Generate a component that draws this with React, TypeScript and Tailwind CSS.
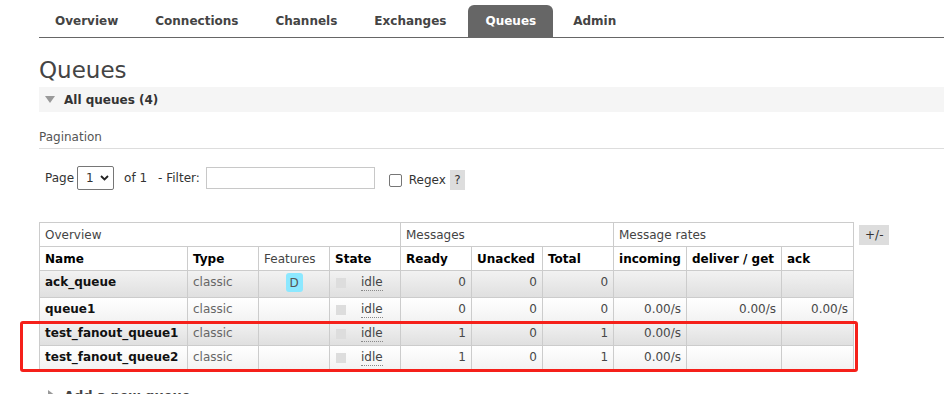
import React from 'react';

const tabs = ['Overview', 'Connections', 'Channels', 'Exchanges', 'Queues', 'Admin'];

type Row = {
  name: string;
  durable: boolean;
  ready: number;
  unacked: number;
  total: number;
  incoming: string;
  deliver: string;
  ack: string;
};

const rows: Row[] = [
  { name: 'ack_queue', durable: true, ready: 0, unacked: 0, total: 0, incoming: '', deliver: '', ack: '' },
  { name: 'queue1', durable: false, ready: 0, unacked: 0, total: 0, incoming: '0.00/s', deliver: '0.00/s', ack: '0.00/s' },
  { name: 'test_fanout_queue1', durable: false, ready: 1, unacked: 0, total: 1, incoming: '0.00/s', deliver: '', ack: '' },
  { name: 'test_fanout_queue2', durable: false, ready: 1, unacked: 0, total: 1, incoming: '0.00/s', deliver: '', ack: '' },
];

const Triangle = () => (
  <svg width="10" height="7" viewBox="0 0 10 7" className="shrink-0">
    <path d="M0 0 L10 0 L5 7 Z" fill="#999" />
  </svg>
);

export default function App() {
  const cell = 'border border-[#ccc] px-[5px] whitespace-nowrap leading-[16px] overflow-hidden';

  return (
    <div className="relative w-[944px] h-[394px] overflow-hidden bg-white text-[12px] text-[#484848] font-['DejaVu_Sans',Verdana,sans-serif]">
      {/* top tabs */}
      <div className="ml-[39px] border-b border-[#666] pt-[5px]">
        <div className="-ml-[1px] flex gap-[3px] h-[32px]">
          {tabs.map((t) => (
            <div
              key={t}
              className={
                t === 'Queues'
                  ? 'px-[17px] ml-[2px] flex items-center font-bold rounded-t-[6px] bg-[#666] text-white'
                  : 'px-[17px] flex items-center font-bold text-[#444]'
              }
            >
              {t}
            </div>
          ))}
        </div>
      </div>

      <div className="ml-[39px]">
        <h1 className="mt-[18px] text-[23px] leading-[28px] text-[#444]">Queues</h1>

        <div className="mt-[3px] h-[25px] bg-[#f5f5f5] flex items-center gap-[9px] pl-[6px]">
          <Triangle />
          <span className="font-bold text-[#333]">All queues (4)</span>
        </div>

        <div className="mt-[17px] pb-[3px] border-b border-[#ddd] leading-[16px] text-[#555]">Pagination</div>

        <div className="mt-[17px] h-[24px] flex items-center pl-[6px] text-[#333]">
          <span>Page</span>
          <div className="ml-[3px] w-[37px] h-[24px] border border-[#767676] rounded-[2px] flex items-center pl-[8px] gap-[6px]">
            <span>1</span>
            <svg width="9" height="6" viewBox="0 0 9 6">
              <path d="M1 1 L4.5 4.5 L8 1" stroke="#222" strokeWidth="1.8" fill="none" />
            </svg>
          </div>
          <span className="ml-[10px]">of 1</span>
          <span className="ml-[11px]">- Filter:</span>
          <div className="ml-[6px] w-[169px] h-[22px] border border-[#c8c8c8]" />
          <div className="ml-[14px] mt-[4px] w-[13px] h-[13px] border border-[#767676] rounded-[2px]" />
          <span className="ml-[7px] mt-[4px]">Regex</span>
          <span className="ml-[4px] mt-[3px] w-[15px] h-[20px] bg-[#ddd] flex items-center justify-center">?</span>
        </div>

        <div className="mt-[32px] flex items-start">
          <table className="table-fixed border-collapse w-[814px]">
            <colgroup>
              <col className="w-[148px]" />
              <col className="w-[71px]" />
              <col className="w-[71px]" />
              <col className="w-[71px]" />
              <col className="w-[71px]" />
              <col className="w-[71px]" />
              <col className="w-[71px]" />
              <col className="w-[73px]" />
              <col className="w-[95px]" />
              <col className="w-[72px]" />
            </colgroup>
            <thead>
              <tr className="h-[24px] text-left">
                <th colSpan={4} className={`${cell} font-normal text-[#444]`}>Overview</th>
                <th colSpan={3} className={`${cell} font-normal text-[#444]`}>Messages</th>
                <th colSpan={3} className={`${cell} font-normal text-[#444]`}>Message rates</th>
              </tr>
              <tr className="h-[24px] text-left text-black">
                <th className={cell}>Name</th>
                <th className={cell}>Type</th>
                <th className={`${cell} font-normal text-[#444]`}>Features</th>
                <th className={cell}>State</th>
                <th className={cell}>Ready</th>
                <th className={cell}>Unacked</th>
                <th className={cell}>Total</th>
                <th className={cell}>incoming</th>
                <th className={cell}>deliver / get</th>
                <th className={cell}>ack</th>
              </tr>
            </thead>
            <tbody>
              {rows.map((r, i) => (
                <tr
                  key={r.name}
                  className={
                    (i % 2 === 0
                      ? 'bg-gradient-to-b from-[#f2f2f2] to-[#dfdfdf]'
                      : 'bg-gradient-to-b from-[#ffffff] to-[#f2f2f2]') +
                    (r.durable ? ' h-[27px]' : ' h-[24px]')
                  }
                >
                  <td className={`${cell} font-bold text-[#111] align-top pt-[3px]`}>{r.name}</td>
                  <td className={`${cell} text-[#666] align-top pt-[3px]`}>classic</td>
                  <td className={`${cell} text-center align-top pt-[2px]`}>
                    {r.durable && (
                      <span className="inline-flex items-center justify-center w-[17px] h-[19px] rounded-[3px] bg-[#8ce8ff] text-[#555]">
                        D
                      </span>
                    )}
                  </td>
                  <td className={`${cell} align-top pt-[3px]`}>
                    <div className="flex items-center h-[17px]">
                      <span className="w-[10px] h-[10px] bg-[#ddd] ml-[1px]" />
                      <span className="ml-[15px] border-b border-dotted border-[#888] leading-[15px] text-[#444]">idle</span>
                    </div>
                  </td>
                  <td className={`${cell} text-right align-top pt-[3px]`}>{r.ready}</td>
                  <td className={`${cell} text-right align-top pt-[3px]`}>{r.unacked}</td>
                  <td className={`${cell} text-right align-top pt-[3px]`}>{r.total}</td>
                  <td className={`${cell} text-right align-top pt-[3px]`}>{r.incoming}</td>
                  <td className={`${cell} text-right align-top pt-[3px]`}>{r.deliver}</td>
                  <td className={`${cell} text-right align-top pt-[3px]`}>{r.ack}</td>
                </tr>
              ))}
            </tbody>
          </table>
          <span className="ml-[5px] mt-[3px] px-[6px] h-[20px] bg-[#ddd] flex items-center text-[#333]">+/-</span>
        </div>

        <div className="mt-[16px] flex items-center gap-[8px] pl-[9px]">
          <svg width="8" height="12" viewBox="0 0 8 12" className="shrink-0">
            <path d="M0 0 L8 6 L0 12 Z" fill="#999" />
          </svg>
          <span className="font-bold text-[#444] text-[13px]">Add a new queue</span>
        </div>
      </div>

      {/* red annotation box */}
      <div className="absolute left-[20px] top-[321px] w-[838px] h-[51px] border-[3px] border-[#f5201a] rounded-[3px]" />
    </div>
  );
}
